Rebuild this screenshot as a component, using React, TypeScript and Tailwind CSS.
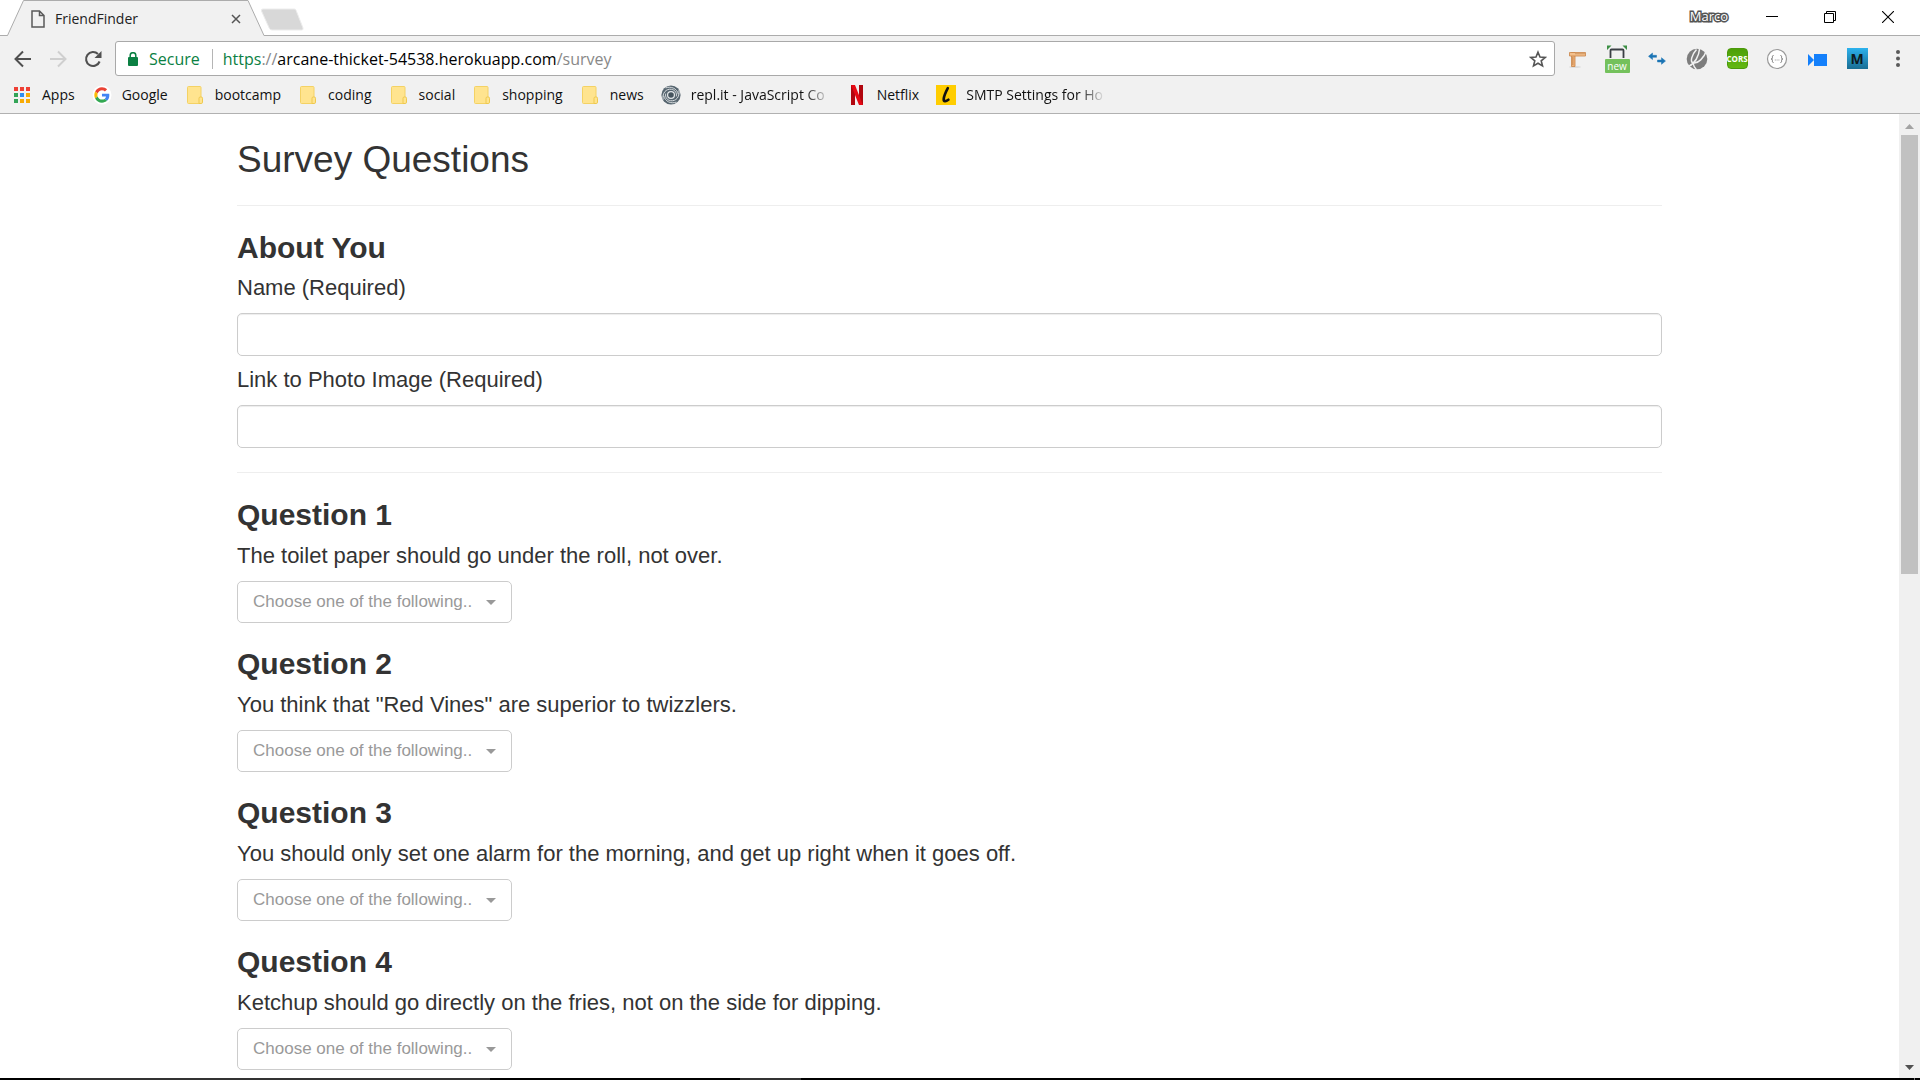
import type { ReactNode } from "react";

const questions = [
  "The toilet paper should go under the roll, not over.",
  'You think that "Red Vines" are superior to twizzlers.',
  "You should only set one alarm for the morning, and get up right when it goes off.",
  "Ketchup should go directly on the fries, not on the side for dipping.",
];

const answers = [
  "1 (Strongly Disagree)",
  "2",
  "3",
  "4",
  "5 (Strongly Agree)",
];

/* ---------- bookmark icons ---------- */

function AppsIcon() {
  const colors = ["#ee4035", "#ee4035", "#ee4035", "#33a457", "#2f8def", "#f8ab05", "#33a457", "#f8ab05", "#f8ab05"];
  return (
    <svg width="20" height="20" viewBox="0 0 20 20" aria-hidden="true">
      {colors.map((c, i) => (
        <rect key={i} x={2 + (i % 3) * 6} y={2 + Math.floor(i / 3) * 6} width="4" height="4" fill={c} />
      ))}
    </svg>
  );
}

function GoogleIcon() {
  return (
    <svg width="20" height="20" viewBox="0 0 20 20" aria-hidden="true">
      <circle cx="10" cy="10" r="9.5" fill="#fff" />
      <g transform="translate(2.3 2.3) scale(.32)">
        <path fill="#EA4335" d="M24 9.5c3.54 0 6.71 1.22 9.21 3.6l6.85-6.85C35.9 2.38 30.47 0 24 0 14.62 0 6.51 5.38 2.56 13.22l7.98 6.19C12.43 13.72 17.74 9.5 24 9.5z" />
        <path fill="#4285F4" d="M46.98 24.55c0-1.57-.15-3.09-.38-4.55H24v9.02h12.94c-.58 2.96-2.26 5.48-4.78 7.18l7.73 6c4.51-4.18 7.09-10.36 7.09-17.65z" />
        <path fill="#FBBC05" d="M10.53 28.59c-.48-1.45-.76-2.99-.76-4.59s.27-3.14.76-4.59l-7.98-6.19C.92 16.46 0 20.12 0 24c0 3.88.92 7.54 2.56 10.78l7.97-6.19z" />
        <path fill="#34A853" d="M24 48c6.48 0 11.93-2.13 15.89-5.81l-7.73-6c-2.15 1.45-4.92 2.3-8.16 2.3-6.26 0-11.57-4.22-13.47-9.91l-7.98 6.19C6.51 42.62 14.62 48 24 48z" />
      </g>
    </svg>
  );
}

function FolderIcon() {
  return (
    <svg width="20" height="20" viewBox="0 0 20 20" aria-hidden="true">
      <rect x="2.5" y="1.5" width="13.5" height="17" rx="1" fill="#ffe48f" stroke="#f4d264" />
      <path d="M14 18.5v-5.2q0-1.3 1.3-1.3h1q1.2 0 1.2 1.3v3.9q0 1.3-1.3 1.3z" fill="#ffe48f" stroke="#efc94e" />
    </svg>
  );
}

function ReplIcon() {
  return (
    <svg width="20" height="20" viewBox="0 0 20 20" aria-hidden="true">
      <circle cx="10" cy="10" r="9.6" fill="#56656f" />
      <g fill="none" stroke="#e4e8ea" strokeWidth=".9" strokeLinecap="round">
        <path d="M2 14.5C1 8 5 3.500 10.500 4.300c3.500.6 5.500 3.500 4.900 6.700" />
        <path d="M18 5.500C19 12 15 16.500 9.500 15.700 6 15.100 4 12.200 4.600 9" />
        <path d="M5 2.800C10 .8 16 3.500 17.300 9" />
        <path d="M15 17.200C10 19.200 4 16.500 2.700 11" />
      </g>
      <circle cx="10" cy="10" r="4" fill="#e4e8ea" />
      <circle cx="10" cy="10" r="2.800" fill="#45545e" />
    </svg>
  );
}

function NetflixIcon() {
  return (
    <svg width="20" height="20" viewBox="0 0 20 20" aria-hidden="true">
      <path d="M4 0h4v20l-4 .3zM12 0h4v20.300l-4-.3z" fill="#b1060f" />
      <path d="M4 0h4l8 20.300-4-.3z" fill="#e50914" />
    </svg>
  );
}

function LIcon() {
  return (
    <svg width="20" height="20" viewBox="0 0 20 20" aria-hidden="true">
      <rect width="20" height="20" fill="#ffcd00" />
      <path d="M11.800 3.200C9.800 7 8 11.200 7.700 14c-.2 2.600 2 2.800 4.700.7" fill="none" stroke="#111" strokeWidth="2.600" strokeLinecap="round" />
    </svg>
  );
}

const bookmarks: { label: string; icon: ReactNode; fade?: boolean }[] = [
  { label: "Apps", icon: <AppsIcon /> },
  { label: "Google", icon: <GoogleIcon /> },
  { label: "bootcamp", icon: <FolderIcon /> },
  { label: "coding", icon: <FolderIcon /> },
  { label: "social", icon: <FolderIcon /> },
  { label: "shopping", icon: <FolderIcon /> },
  { label: "news", icon: <FolderIcon /> },
  { label: "repl.it - JavaScript Co", icon: <ReplIcon />, fade: true },
  { label: "Netflix", icon: <NetflixIcon /> },
  { label: "SMTP Settings for Ho", icon: <LIcon />, fade: true },
];

/* ---------- extension icons ---------- */

function RulerIcon() {
  return (
    <svg width="20" height="20" viewBox="0 0 20 20" aria-hidden="true">
      <ellipse cx="8" cy="18" rx="6" ry="1" fill="#ddd" />
      <path d="M4.500 3.500h3.500v14H4.500z" fill="#eeb27a" stroke="#c98448" strokeWidth=".8" />
      <path d="M2.500 3.500h16v3.500h-16z" fill="#f3c08d" stroke="#c98448" strokeWidth=".8" />
      <path d="M5 9h1.500M5 11h1.500M5 13h1.500M5 15h1.500M9 4v1.300M11 4v1.300M13 4v1.300M15 4v1.300M17 4v1.300" stroke="#a8642c" strokeWidth=".7" />
    </svg>
  );
}

function ScreenshotIcon() {
  return (
    <span className="flex h-7 flex-col items-center">
      <svg width="20" height="14" viewBox="0 0 20 14" aria-hidden="true">
        <path d="M0 .5h4.500L0 5zM20 .5h-4.500L20 5z" fill="#3c8f45" />
        <path d="M3.500 13V5.500q0-1 1-1h11q1 0 1 1V13" fill="none" stroke="#3a3f44" strokeWidth="1.800" />
      </svg>
      <span className="h-[14px] w-[25px] rounded-[1px] bg-[#74c15c] text-center text-[10px] leading-[15px] text-white">new</span>
    </span>
  );
}

function ArrowsIcon() {
  return (
    <svg width="20" height="20" viewBox="0 0 20 20" aria-hidden="true">
      <path d="M1.500 7.300 5.500 4v2.300h4v2h-4v2.300zM18.500 12l-4-3.300V11h-4v2h4v2.300z" fill="#1b74b4" stroke="#1b74b4" strokeWidth=".5" />
    </svg>
  );
}

function SphereIcon() {
  return (
    <svg width="22" height="22" viewBox="0 0 22 22" aria-hidden="true">
      <circle cx="11" cy="11" r="10.300" fill="#7d7d7d" />
      <path d="M20.500 2.500C18 10 12 16 7 14.800 4 14 5.500 7 10.500 1.500" fill="none" stroke="#f1f1f1" strokeWidth="1.500" />
      <path d="M13.500 1C13 8 9 15.500 2.500 18.500" fill="none" stroke="#f1f1f1" strokeWidth="1.500" />
      <path d="M7 14.800c.5 3 1.500 5 3.500 7" fill="none" stroke="#f1f1f1" strokeWidth="1.300" />
    </svg>
  );
}

function CorsIcon() {
  return (
    <span className="flex size-[21px] items-center justify-center rounded-[4px] border border-[#4c9a0c] bg-linear-to-b from-[#4da008] to-[#63b812]">
      <span className="font-['Open_Sans',sans-serif] text-[8px] font-bold leading-none text-white">CORS</span>
    </span>
  );
}

function BracesIcon() {
  return (
    <svg width="22" height="22" viewBox="0 0 22 22" aria-hidden="true">
      <circle cx="11" cy="11" r="9.500" fill="#fff" stroke="#999" strokeWidth="1.200" />
      <path d="M7.500 7.500c-1.500 0-1 1.500-1.100 2.300 0 .8-.4 1.200-1.200 1.200.8 0 1.200.4 1.200 1.200.1.800-.4 2.300 1.100 2.300M14.500 7.500c1.500 0 1 1.500 1.100 2.300 0 .8.4 1.200 1.200 1.200-.8 0-1.200.4-1.200 1.200-.1.800.4 2.300-1.100 2.300" fill="none" stroke="#777" strokeWidth="1" />
      <path d="M8.800 12h1M10.600 12h1M12.400 12h1" stroke="#999" />
    </svg>
  );
}

function CameraIcon() {
  return (
    <svg width="20" height="20" viewBox="0 0 20 20" aria-hidden="true">
      <path d="M7 5h13v12H7z" fill="#1480fb" />
      <path d="M1 5l6 6-6 6z" fill="#1480fb" />
    </svg>
  );
}

function MIcon() {
  return (
    <span className="flex size-[21px] items-center justify-center bg-linear-to-b from-[#2cb2ee] to-[#196d93] font-['Open_Sans',sans-serif] text-sm font-bold leading-none text-[#0d1b22]">
      M
    </span>
  );
}

const extensions: { label: string; icon: ReactNode }[] = [
  { label: "Page ruler", icon: <RulerIcon /> },
  { label: "Screen capture", icon: <ScreenshotIcon /> },
  { label: "Switch window", icon: <ArrowsIcon /> },
  { label: "Web tools", icon: <SphereIcon /> },
  { label: "CORS", icon: <CorsIcon /> },
  { label: "JSON viewer", icon: <BracesIcon /> },
  { label: "Video", icon: <CameraIcon /> },
  { label: "Material", icon: <MIcon /> },
];

/* ---------- browser chrome ---------- */

function TabStrip() {
  return (
    <div className="flex h-9 items-stretch border-b border-[#acacac] bg-white">
      <div className="relative -mb-px flex h-9 w-[271px] items-center pt-px">
        <svg className="absolute inset-0" width="271" height="36" viewBox="0 0 271 36" aria-hidden="true">
          <path d="M0 36.500V35.500H7.500L23.500.5H248L264 35.500H271V36.500z" fill="#f1f1f1" />
          <path d="M0 35.500H7.500L23.500.5H248L264 35.500H271" fill="none" stroke="#acacac" />
        </svg>
        <span className="relative flex h-full w-full items-center pl-[31px] pr-[27px]">
          <svg width="14" height="18" viewBox="0 0 14 18" fill="none" stroke="#5a5a5a" strokeWidth="1.500" aria-hidden="true">
            <path d="M1 1h7.500L13 5.500V17H1zM8.500 1v4.500H13" />
          </svg>
          <span className="ml-[10px] grow text-sm text-[#222]">FriendFinder</span>
          <button type="button" aria-label="Close tab" className="flex size-4 items-center justify-center">
            <svg width="10" height="10" viewBox="0 0 10 10" stroke="#555" strokeWidth="1.500" aria-hidden="true">
              <path d="M1 1l8 8M9 1 1 9" />
            </svg>
          </button>
        </span>
      </div>
      <button type="button" aria-label="New tab" className="-ml-3 mt-2 size-fit">
        <svg width="46" height="23" viewBox="0 0 46 23" aria-hidden="true">
          <path d="M4 1h31q1.500 0 2 1.300L44 20q.6 2-1.500 2H13q-2 0-2.800-2L2.500 3Q2 1 4 1z" fill="#d8d8d8" stroke="#ececec" />
        </svg>
      </button>
      <div className="ml-auto flex items-center pb-[2px] pr-[3px]">
        <span className="mr-[15px] text-[13px] leading-none text-white [-webkit-text-stroke:3px_#555] [paint-order:stroke_fill]">Marco</span>
        <button type="button" aria-label="Minimize" className="flex h-8 w-[58px] items-center justify-center">
          <svg width="12" height="12" viewBox="0 0 12 12" aria-hidden="true"><path d="M0 5.500h12" stroke="#000" /></svg>
        </button>
        <button type="button" aria-label="Restore" className="flex h-8 w-[58px] items-center justify-center">
          <svg width="12" height="12" viewBox="0 0 12 12" fill="none" stroke="#000" aria-hidden="true"><path d="M.5 2.500h9v9h-9zM2.500 2.500v-2h9v9h-2" /></svg>
        </button>
        <button type="button" aria-label="Close" className="flex h-8 w-[58px] items-center justify-center">
          <svg width="12" height="12" viewBox="0 0 12 12" stroke="#000" strokeWidth="1.100" aria-hidden="true"><path d="M0 0l12 12M12 0 0 12" /></svg>
        </button>
      </div>
    </div>
  );
}

function Toolbar() {
  return (
    <div className="flex items-center pl-[5px] pr-px pt-[5px]">
      <button type="button" aria-label="Back" className="flex h-[35px] w-9 items-center justify-center">
        <svg width="18" height="18" viewBox="0 0 18 18" fill="none" stroke="#505050" strokeWidth="2" aria-hidden="true"><path d="M17 9H2M9 1.500 1.500 9 9 16.500" /></svg>
      </button>
      <button type="button" aria-label="Forward" className="flex h-[35px] w-[34px] items-center justify-center">
        <svg width="18" height="18" viewBox="0 0 18 18" fill="none" stroke="#cfcfcf" strokeWidth="2" aria-hidden="true"><path d="M1 9h15M9 1.500 16.500 9 9 16.500" /></svg>
      </button>
      <button type="button" aria-label="Reload" className="flex h-[35px] w-[36px] items-center justify-center">
        <svg width="18" height="18" viewBox="0 0 18 18" aria-hidden="true">
          <path d="M15.600 11.500A7 7 0 1 1 14 4" fill="none" stroke="#505050" strokeWidth="2.100" />
          <path d="M17.500 1v7h-7z" fill="#505050" />
        </svg>
      </button>
      <div className="ml-1 flex h-[35px] grow items-center rounded-[3px] border border-[#a9a9a9] bg-white pl-3 pr-[6px] text-base">
        <svg width="10" height="14" viewBox="0 0 10 14" aria-hidden="true">
          <rect y="5" width="10" height="9" rx="1" fill="#0b8043" />
          <path d="M2.200 6V3.500a2.800 2.800 0 0 1 5.600 0V6" fill="none" stroke="#0b8043" strokeWidth="1.500" />
        </svg>
        <span className="ml-[11px] text-[#0b8043]">Secure</span>
        <span className="ml-3 mr-[10px] h-5 w-px bg-[#b5b5b5]" />
        <span className="grow whitespace-nowrap text-[#888]">
          <span className="text-[#0b8043]">https</span>://<span className="text-black">arcane-thicket-54538.herokuapp.com</span>/survey
        </span>
        <button type="button" aria-label="Bookmark this page" className="flex size-5 items-center justify-center">
          <svg width="18" height="18" viewBox="0 0 18 18" fill="none" stroke="#555" strokeWidth="1.600" aria-hidden="true">
            <path d="M9 2.200l2 4.800 5.200.4-4 3.400 1.300 5.100L9 13.200l-4.500 2.700 1.300-5.100-4-3.400L7 7z" />
          </svg>
        </button>
      </div>
      <div className="ml-[2px] flex">
        {extensions.map((e) => (
          <button key={e.label} type="button" aria-label={e.label} className="flex h-[35px] w-10 items-center justify-center">
            {e.icon}
          </button>
        ))}
        <button type="button" aria-label="Menu" className="flex h-[35px] w-[42px] items-center justify-center">
          <svg width="4" height="17" viewBox="0 0 4 17" fill="#5a5a5a" aria-hidden="true">
            <circle cx="2" cy="2" r="2" /><circle cx="2" cy="8.500" r="2" /><circle cx="2" cy="15" r="2" />
          </svg>
        </button>
      </div>
    </div>
  );
}

function BookmarksBar() {
  return (
    <nav aria-label="Bookmarks" className="flex h-[37px] items-center gap-[17px] pl-3">
      {bookmarks.map((b) => (
        <a key={b.label} href="#" className="flex items-center gap-[10px] text-sm text-[#111]">
          {b.icon}
          {b.fade ? (
            <span className="w-[139px] whitespace-nowrap [mask-image:linear-gradient(to_right,black_82%,transparent)]">{b.label}</span>
          ) : (
            <span>{b.label}</span>
          )}
        </a>
      ))}
    </nav>
  );
}

function Scrollbar() {
  return (
    <div aria-hidden="true" className="flex w-[21px] shrink-0 flex-col items-center bg-[#f0f0f0]">
      <span className="flex h-[21px] items-center justify-center pt-1">
        <svg width="9" height="5" viewBox="0 0 9 5"><path d="M0 5 4.500 0 9 5z" fill="#a3a3a3" /></svg>
      </span>
      <div className="flex w-full grow justify-center">
        <div className="h-[47.6%] w-[17px] bg-[#c1c1c1]" />
      </div>
      <span className="flex h-[21px] items-center justify-center">
        <svg width="9" height="5" viewBox="0 0 9 5"><path d="M0 0h9L4.500 5z" fill="#505050" /></svg>
      </span>
    </div>
  );
}

/* ---------- survey page ---------- */

function TextField({ id, label }: { id: string; label: string }) {
  return (
    <div className="mt-[11px]">
      <label htmlFor={id} className="block text-[22px] leading-[25px]">{label}</label>
      <input
        id={id}
        type="text"
        className="mt-[13px] block h-[43px] w-full rounded-[5px] border border-[#ccc] bg-white px-[15px] text-[17px] shadow-[inset_0_1px_1px_rgba(0,0,0,0.075)]"
      />
    </div>
  );
}

function Question({ number, text }: { number: number; text: string }) {
  const id = `q${number}`;
  return (
    <section>
      <h3 className="text-3xl/[33px] font-bold">Question {number}</h3>
      <label htmlFor={id} className="mt-3 block text-[22px] leading-[25px]">{text}</label>
      <div className="mt-[13px] grid w-[275px] items-center">
        <select
          id={id}
          defaultValue=""
          className="col-start-1 row-start-1 h-[42px] w-full appearance-none rounded-[5px] border border-[#ccc] bg-white pl-[15px] pr-8 text-[17px] text-[#999]"
        >
          <option value="" hidden>Choose one of the following..</option>
          {answers.map((a) => (
            <option key={a}>{a}</option>
          ))}
        </select>
        <svg className="pointer-events-none col-start-1 row-start-1 mr-4 justify-self-end" width="10" height="5" viewBox="0 0 10 5" aria-hidden="true">
          <path d="M0 0h10L5 5z" fill="#999" />
        </svg>
      </div>
    </section>
  );
}

export default function App() {
  return (
    <div className="flex h-screen flex-col overflow-hidden bg-white">
      <header className="shrink-0 border-b border-[#b1b1b1] bg-[#f1f1f1] font-['Open_Sans','Noto_Sans',sans-serif]">
        <TabStrip />
        <Toolbar />
        <BookmarksBar />
      </header>
      <div className="flex min-h-0 grow">
        <main className="min-w-0 grow overflow-hidden font-['Liberation_Sans',Arial,sans-serif] text-[#333]">
          <form className="mx-auto max-w-[1425px]">
            <h2 className="pt-[25px] text-[37px] leading-[41px]">Survey Questions</h2>
            <hr className="my-[25px] border-[#eee]" />
            <h3 className="text-3xl/[33px] font-bold">About You</h3>
            <TextField id="name" label="Name (Required)" />
            <TextField id="photo" label="Link to Photo Image (Required)" />
            <hr className="mb-[25px] mt-6 border-[#eee]" />
            <div className="flex flex-col gap-6">
              {questions.map((q, i) => (
                <Question key={q} number={i + 1} text={q} />
              ))}
            </div>
          </form>
        </main>
        <Scrollbar />
      </div>
      <div aria-hidden="true" className="flex h-[2px] shrink-0 bg-black">
        <span className="ml-[60px] w-[430px] bg-[#333]" />
        <span className="ml-[250px] w-[61px] bg-[#333]" />
        <span className="ml-auto mr-[5px] w-px bg-[#777]" />
      </div>
    </div>
  );
}
